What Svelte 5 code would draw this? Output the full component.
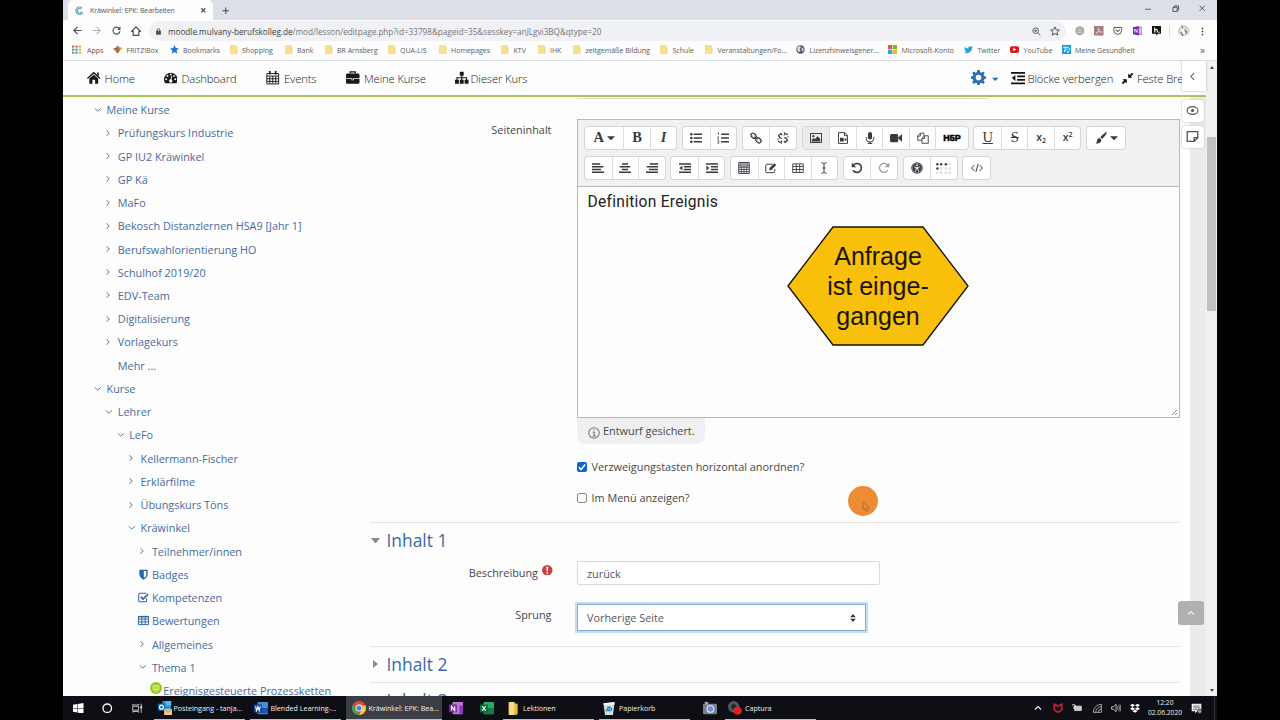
<script lang="ts">
	type Bookmark = { icon: string; label: string; width: number }
	type TreeItem = { label: string; level: number; icon: string }
	type Tool = { icon: string; width?: number; state?: string }

	const icons: Record<string, string> = {
		// browser
		site: '<g fill="none" stroke-width="2"><path d="M13 4A6.500 6.500 0 1 0 14 11" stroke="#7b9ab0"/><path d="M11 5.500A4 4 0 1 0 12 10" stroke="#5aa9bd"/></g>',
		close: '<path d="M3 3l10 10M13 3L3 13" stroke="currentColor" stroke-width="2.600"/>',
		plus: '<path d="M8 1v14M1 8h14" stroke="currentColor" stroke-width="2"/>',
		minimize: '<path d="M2 8.500h12" stroke="currentColor" stroke-width="1.500"/>',
		restore: '<path d="M2 5h9v9H2zM5 5V2h9v9h-3" fill="none" stroke="currentColor" stroke-width="1.800"/>',
		closeWindow: '<path d="M1.500 1.500l13 13M14.500 1.500l-13 13" stroke="currentColor" stroke-width="2"/>',
		back: '<path d="M15 8H2M8 1.500L1.500 8 8 14.500" fill="none" stroke="currentColor" stroke-width="2"/>',
		forward: '<path d="M1 8h13M8 1.500L14.500 8 8 14.500" fill="none" stroke="currentColor" stroke-width="2"/>',
		reload: '<path d="M13 4.500A6.200 6.200 0 1 0 14.200 9" fill="none" stroke="currentColor" stroke-width="2"/><path d="M15 1v6H9z" fill="currentColor"/>',
		house: '<path d="M1 8.500L8 1.500l7 7h-2.500V15h-9V8.500z" fill="none" stroke="currentColor" stroke-width="1.900"/>',
		lock: '<rect x="2.500" y="6.500" width="11" height="9" rx="1" fill="currentColor"/><path d="M5 7V4.500a3 3 0 0 1 6 0V7" fill="none" stroke="currentColor" stroke-width="1.800"/>',
		magnifier: '<circle cx="6.500" cy="6.500" r="5" fill="none" stroke="currentColor" stroke-width="1.600"/><path d="M10 10l5 5M4 6.500h5M6.500 4v5" stroke="currentColor" stroke-width="1.500"/>',
		star: '<path d="M8 1.500l2 4.600 5 .4-3.800 3.300 1.200 4.900L8 12.100l-4.400 2.600 1.200-4.900L1 6.500l5-.4z" fill="none" stroke="currentColor" stroke-width="1.500"/>',
		extGrey: '<circle cx="8" cy="8" r="7.500" fill="#aaa"/><path d="M4.500 10.500h7M5.500 8l2.500-3 2.500 3" stroke="#ddd" stroke-width="1.500" fill="none"/>',
		pdf: '<path d="M0 0h16v16H0z" fill="#a67c7c"/><path d="M3 13c4-3 5-6 4.500-9.500C9 8 10 10 13.500 10.500 9 9 6 10 3 13z" fill="none" stroke="#e9dcdc" stroke-width="1.300"/>',
		pocket: '<path d="M1.500 2.500h13v5a6.500 6.500 0 0 1-13 0z" fill="none" stroke="#555" stroke-width="1.600"/><path d="M4.500 6L8 9.500 11.500 6" fill="none" stroke="#555" stroke-width="1.700"/>',
		onenoteExt: '<path d="M0 2l10-2v16L0 14z" fill="#7a28a8"/><path d="M10 2h5.500v12H10" fill="#d9b8ea" stroke="#7a28a8"/><path d="M3 11V5l4 6V5" fill="none" stroke="#fff" stroke-width="1.400"/>',
		hypothesis: '<path d="M0 0h16v13h-6l-2 3-2-3H0z" fill="#151515"/><path d="M4.500 2.500V11M4.500 7.500c3-3 4.500-1.500 4.500 1V11" fill="none" stroke="#fff" stroke-width="1.900"/><circle cx="12" cy="10.500" r="1.100" fill="#fff"/>',
		avatar: '<circle cx="8" cy="8" r="8" fill="#d7d3d3"/><path d="M4 2c3-1 5 1 4.500 4L13 13l-3 2-5-5z" fill="#faf7f6"/><path d="M5 1l2 4M4 10l3 5M9 7l3 3-2 3" stroke="#665558" stroke-width="1.400" fill="none"/>',
		dots: '<g fill="currentColor"><circle cx="8" cy="2.500" r="1.600"/><circle cx="8" cy="8" r="1.600"/><circle cx="8" cy="13.500" r="1.600"/></g>',
		apps: '<path d="M0 1h4v3.500H0z" fill="#d9534a"/><path d="M6 1h4v3.500H6z" fill="#dc6258"/><path d="M12 1h4v3.500h-4z" fill="#e0a03e"/><path d="M0 6.500h4V10H0z" fill="#51a068"/><path d="M6 6.500h4V10H6z" fill="#4b86d8"/><path d="M12 6.500h4V10h-4z" fill="#dfae45"/><path d="M0 12h4v3.500H0z" fill="#56a26a"/><path d="M6 12h4v3.500H6z" fill="#5b9a68"/><path d="M12 12h4v3.500h-4z" fill="#d8b64a"/>',
		fritz: '<path d="M8 1l3 3 5 1.500L13 9l-5 6-4-5-4-3 5-2z" fill="#d63b2a"/><path d="M0 6c5-2 11-2 16 1-4 4-12 4-16-1z" fill="#e8bb2e"/><path d="M3 6.500l9 1" stroke="#38497c" stroke-width="2"/>',
		bluestar: '<path d="M8 0l2.300 5.500 5.700.5-4.300 3.800L13 15.500 8 12.500l-5 3 1.300-5.700L0 6l5.700-.5z" fill="#2475d3"/>',
		folder: '<path d="M2 0h11v2.500L15 4v12H2z" fill="#f1d77a"/><path d="M2 0h11v12.500l2 3.500H2z" fill="#f8e08e"/>',
		globe: '<circle cx="8" cy="8" r="7.500" fill="#555b60"/><path d="M3 3l4-1 2 3-3 2 2 3-3 3-3-5zM11 4l3 4-2 4-2-4z" fill="#dfe2e4"/>',
		microsoft: '<path d="M0 0h7.500v7.500H0z" fill="#e8573a"/><path d="M8.500 0H16v7.500H8.500z" fill="#83b82e"/><path d="M0 8.500h7.500V16H0z" fill="#33a1de"/><path d="M8.500 8.500H16V16H8.500z" fill="#f0b52a"/>',
		twitter: '<path d="M0 2.500c2 2.300 4.500 3.300 7.500 3.400C7.300 2.500 10.800.8 13.300 3L16 2.200 14.500 5C14.500 12 7 17 0 13.200c2 0 3.300-.4 4.600-1.400-1.700-.2-2.600-1-3-2.300h1.300C1.200 8.600.6 7.500.6 6l1.300.4C.6 5.300 0 4 .1 2.500z" fill="#2aa3df"/>',
		youtube: '<rect y="2" width="16" height="12" rx="3" fill="#e0191b"/><path d="M6 5v6l5-3z" fill="#fff"/>',
		tk: '<path d="M0 0h16v16H0z" fill="#1c9ad6"/><path d="M2 4h8c5 0 5 8-1 8l3 2M6 4L4 13M10 6l-5 5" stroke="#fff" stroke-width="1.600" fill="none"/>',
		// course navigation
		home: '<path d="M8 1l8 7.200-1 1.200L8 3.200 1 9.400 0 8.200zM12 1.800h2V6l-2-1.800zM2.800 9L8 4.400 13.200 9v6H9.600v-4.500H6.400V15H2.800z" fill="currentColor"/>',
		gauge: '<path d="M0 10a8 8 0 0 1 16 0c0 1.800-.5 3.300-1.300 4.500H1.300A8 8 0 0 1 0 10z" fill="currentColor"/><g fill="#fff"><circle cx="2.600" cy="9.800" r="1.100"/><circle cx="4.200" cy="5.900" r="1.100"/><circle cx="8" cy="4.200" r="1.100"/><circle cx="11.800" cy="5.900" r="1.100"/><circle cx="13.400" cy="9.800" r="1.100"/><path d="M8.700 5.800l1 .2-.8 4a2 2 0 1 1-1.100-.2z"/></g>',
		calendar: '<path d="M1 3h14v12.300H1zM1 6h14M1 9.200h14M1 12.300h14M4.500 6v9M8 6v9M11.500 6v9" stroke="currentColor" stroke-width="1.100" fill="none"/><path d="M4.500 0v4M11.500 0v4" stroke="currentColor" stroke-width="2"/>',
		briefcase: '<path d="M5 3V1h6v2" fill="none" stroke="currentColor" stroke-width="1.500"/><path d="M1 3h14l1 1v4.500H0V4zM0 9.500h6.500V11h3V9.500H16V14l-1 1H1l-1-1zM7.200 9h1.600v1.200H7.200z" fill="currentColor"/>',
		sitemap: '<path d="M5.700 1h4.600v4.500H5.700zM0 10.500h4.600V15H0zM5.700 10.500h4.600V15H5.700zM11.400 10.500H16V15h-4.600z" fill="currentColor"/><path d="M8 5v6M2.300 11V8h11.400v3" stroke="currentColor" stroke-width="1.300" fill="none"/>',
		gear: '<path d="M6.700 0h2.600l.4 2.200 1.300.6 1.900-1.300 1.800 1.800-1.300 1.900.6 1.300 2 .4v2.500l-2 .4-.6 1.300 1.300 1.900-1.800 1.800-1.900-1.300-1.300.6-.4 2H6.700l-.4-2-1.300-.6-1.900 1.300L1.300 13l1.300-1.900L2 9.800l-2-.4V6.900l2-.4.600-1.300-1.300-1.900 1.800-1.800L5 2.800l1.300-.6zM8 5a3 3 0 1 0 0 6 3 3 0 0 0 0-6z" fill="currentColor" fill-rule="evenodd"/>',
		caret: '<path d="M0 4.500h16L8 12.500z" fill="currentColor"/>',
		blocks: '<path d="M0 1h16v2H0zM7 5h9v2H7zM7 9h9v2H7zM0 13h16v2H0zM5 4.500v7L1 8z" fill="currentColor"/>',
		compress: '<path d="M9 .800V7h6.200zM7 15.200V9H.800z" fill="currentColor"/><path d="M15.500.5l-5 5M.5 15.500l5-5" stroke="currentColor" stroke-width="2.600"/>',
		left: '<path d="M11 2L5 8l6 6" fill="none" stroke="currentColor" stroke-width="1.800"/>',
		right: '<path d="M5 2.500L10.500 8 5 13.500" fill="none" stroke="currentColor" stroke-width="2"/>',
		down: '<path d="M1.500 5L8 11l6.500-6" fill="none" stroke="currentColor" stroke-width="2"/>',
		up: '<path d="M2 11l6-6 6 6" fill="none" stroke="currentColor" stroke-width="2.200"/>',
		eye: '<ellipse cx="8" cy="8" rx="6.700" ry="4.800" fill="none" stroke="currentColor" stroke-width="1.400"/><circle cx="8" cy="8" r="1.900" fill="currentColor"/>',
		note: '<path d="M1.500 2h13v7.500L10 14H1.500zM14.500 9.500H10V14" fill="none" stroke="currentColor" stroke-width="1.600"/>',
		shield: '<path d="M2 1h12v6.500c0 4-3 6-6 8-3-2-6-4-6-8z" fill="currentColor"/><path d="M8.500 3H12v4.500c0 2.500-1.500 4-3.500 5.300z" fill="#fff"/>',
		checked: '<path d="M12.500 9v3.500a1.500 1.500 0 0 1-1.500 1.800H2.800A1.800 1.800 0 0 1 1 12.500V3.500a1.800 1.800 0 0 1 1.800-1.800H12" fill="none" stroke="currentColor" stroke-width="1.500"/><path d="M4 7l3.300 3.300L14.800 3" fill="none" stroke="currentColor" stroke-width="2.600"/>',
		table: '<path d="M.7 2h14.600v12H.7zM.7 6h14.600M.7 10h14.600M5.500 2v12M10.500 2v12" fill="none" stroke="currentColor" stroke-width="1.400"/><path d="M.7 1.500h14.600v2H.7z" fill="currentColor"/>',
		lesson: '<circle cx="8" cy="8" r="8" fill="#99c816"/><rect x="4" y="4.500" width="8" height="6" rx="1" fill="#b9dc55" stroke="#e5f4bd"/><path d="M5.500 12.300h5" stroke="#e5f4bd"/>',
		// editor toolbar
		ul: '<path d="M5 2h11v2H5zM5 7h11v2H5zM5 12h11v2H5z" fill="currentColor"/><g fill="currentColor"><circle cx="1.800" cy="3" r="1.700"/><circle cx="1.800" cy="8" r="1.700"/><circle cx="1.800" cy="13" r="1.700"/></g>',
		ol: '<path d="M5.500 2H16v2H5.500zM5.500 7H16v2H5.500zM5.500 12H16v2H5.500z" fill="currentColor"/><path d="M1 1l1-.5V4M.5 6.500h2L.7 9.500h2M.6 11.500h2L1.500 13h1v2H.5" fill="none" stroke="currentColor" stroke-width=".9"/>',
		link: '<g fill="none" stroke="currentColor" stroke-width="1.700"><rect x="1" y="2.200" width="7.500" height="5.400" rx="2.500" transform="rotate(45 4.700 4.900)"/><rect x="7.500" y="8.400" width="7.500" height="5.400" rx="2.500" transform="rotate(45 11.300 11.100)"/><path d="M6 6.200l4 3.600"/></g>',
		unlink: '<g fill="none" stroke="currentColor" stroke-width="1.700"><path d="M6.800 4.200L5.200 2.200 2 4.800l2.300 3.400 2 .3M9.200 11.800l1.600 2L14 11.200l-2.300-3.400-2-.3"/><path d="M9 4.500L12 1.800 14.500 4M7 11.500L4 14.200 1.500 12" stroke-width="1.400"/></g><path d="M0 9.500h2.500M6 13v3M10 0v2.500M13.500 6.500H16" stroke="currentColor"/>',
		image: '<rect x=".7" y="2" width="14.600" height="12" fill="none" stroke="currentColor" stroke-width="1.300"/><circle cx="4.500" cy="5.500" r="1.500" fill="currentColor"/><path d="M2.500 12.500V10L5 8l1.500 1.500L10 5.500l3.500 3.500v3.500z" fill="currentColor"/>',
		media: '<path d="M2 .8h8.500L14 4.500v10.700H2zM10 1v4h4" fill="none" stroke="currentColor" stroke-width="1.300"/><path d="M4 7.500h5v5H4zM9.500 10L12.500 7.500v5z" fill="currentColor"/>',
		mic: '<rect x="5.300" width="5.400" height="10" rx="2.700" fill="currentColor"/><path d="M3 6.500v2a5 5 0 0 0 10 0v-2M8 13v2.500M5 15.300h6" fill="none" stroke="currentColor" stroke-width="1.300"/>',
		video: '<rect y="2.500" width="11" height="11" rx="2" fill="currentColor"/><path d="M10.500 8L16 2.700v10.600z" fill="currentColor"/>',
		files: '<path d="M6.500 11H1V5l3.500-3.500H9V5M4.500 2v3.500H1M10 5h5v10H6.500V8.500zM10 5v3.500H6.500" fill="none" stroke="currentColor" stroke-width="1.200"/>',
		brush: '<path d="M15.500.3c1 1-2.500 6-6 9L7 7C9.800 3.500 14.500-.6 15.500.3zM6 8l2.500 2.300c0 4-4 6-8 4.700 2-.5 2-2 2.300-4C3.300 9.300 4.500 8 6 8z" fill="currentColor"/>',
		alignLeft: '<path d="M0 1.500h11v2H0zM0 5.200h15v2H0zM0 8.900h12v2H0zM0 12.600h16v2H0z" fill="currentColor"/>',
		alignCenter: '<path d="M4 1.500h8v2H4zM1 5.200h14v2H1zM4 8.900h8v2H4zM0 12.600h16v2H0z" fill="currentColor"/>',
		alignRight: '<path d="M5 1.500h11v2H5zM1 5.200h15v2H1zM4 8.900h12v2H4zM0 12.600h16v2H0z" fill="currentColor"/>',
		outdent: '<path d="M0 1.500h16v2H0zM6.500 5.200H16v2H6.500zM6.500 8.900H16v2H6.500zM0 12.600h16v2H0zM4.500 4.700v6.600L.5 8z" fill="currentColor"/>',
		indent: '<path d="M0 1.500h16v2H0zM6.500 5.200H16v2H6.500zM6.500 8.900H16v2H6.500zM0 12.600h16v2H0zM.5 4.700v6.600l4-3.300z" fill="currentColor"/>',
		calculator: '<path d="M1 .7h14v14.600H1z" fill="none" stroke="currentColor" stroke-width="1.300"/><path d="M2.500 2.500h11v3h-11zM1 7.500h14M1 10h14M1 12.700h14M4.500 6v9M8 6v9M11.500 6v9" fill="#bbb" stroke="currentColor" stroke-width="1"/>',
		edit: '<path d="M13 9.500v3a1.600 1.600 0 0 1-1.600 1.700H2.600A1.600 1.600 0 0 1 1 12.500v-8A1.600 1.600 0 0 1 2.600 3H10" fill="none" stroke="currentColor" stroke-width="1.300"/><path d="M5.500 11l.6-3L12.500 1.500 15 4 8.500 10.500z" fill="currentColor"/>',
		grid: '<path d="M1 2.500h14v11.500H1zM1 6h14M1 10h14M5.700 2.500V14M10.300 2.500V14" fill="none" stroke="currentColor" stroke-width="1.200"/>',
		cursor: '<path d="M4.500 1C6.500 1 8 1.500 8 3c0-1.500 1.500-2 3.500-2M8 3v10M4.500 15C6.500 15 8 14.500 8 13c0 1.500 1.500 2 3.500 2M6 8h4" fill="none" stroke="currentColor" stroke-width="1.300"/>',
		undo: '<path d="M3 4.500a6 6 0 1 1-.2 6.500" fill="none" stroke="currentColor" stroke-width="2.100"/><path d="M1 1v6h6z" fill="currentColor"/>',
		redo: '<path d="M13 4.500a6 6 0 1 0 .2 6.500" fill="none" stroke="currentColor" stroke-width="1.700"/><path d="M15 1v6H9z" fill="currentColor"/>',
		access: '<circle cx="8" cy="8" r="7.700" fill="currentColor"/><circle cx="8" cy="8" r="6.400" fill="none" stroke="#fff" stroke-width=".5"/><circle cx="8" cy="4.200" r="1.200" fill="#fff"/><path d="M4 6.500l3 .7v2L5.700 13M12 6.500l-3 .7v2l1.300 3.800M7 7.300h2v2H7z" fill="none" stroke="#fff"/>',
		braille: '<g fill="currentColor"><circle cx="1.500" cy="3.500" r="1.300"/><circle cx="5.500" cy="3.500" r="1.300"/><circle cx="1.500" cy="8" r="1.300"/><circle cx="10.500" cy="3.500" r="1.300"/></g><g fill="none" stroke="#bbb" stroke-width=".6"><circle cx="14.500" cy="3.500" r="1"/><circle cx="5.500" cy="8" r="1"/><circle cx="10.500" cy="8" r="1"/><circle cx="14.500" cy="8" r="1"/><circle cx="1.500" cy="12.500" r="1"/><circle cx="5.500" cy="12.500" r="1"/><circle cx="10.500" cy="12.500" r="1"/><circle cx="14.500" cy="12.500" r="1"/></g>',
		code: '<path d="M4.500 4L.8 8l3.700 4M11.500 4l3.700 4-3.700 4M9.500 2.500l-3 11" fill="none" stroke="currentColor" stroke-width="1.300"/>',
		info: '<circle cx="8" cy="8" r="7" fill="none" stroke="currentColor" stroke-width="1.400"/><path d="M7 4h2M6.300 7H8.300v5M6 12h4.500" fill="none" stroke="currentColor" stroke-width="1.500"/>',
		required: '<circle cx="8" cy="8" r="8" fill="#c9403e"/><path d="M6.600 2.500h2.800L9 9.500H7zM6.800 11h2.400v2.400H6.800z" fill="#fff"/>',
		updown: '<path d="M8 0l5.500 6.500h-11zM8 16l5.500-6.500h-11z" fill="currentColor"/>',
		check: '<path d="M3 8.500l3.500 3.500L13 4" fill="none" stroke="#fff" stroke-width="2.500"/>',
		pointer: '<path d="M3 1v12l3-2.500 2 4.500 2.200-1-2-4.300H12z" fill="#ec8c35" stroke="#a96430" stroke-width="1.100"/>',
		// taskbar
		windows: '<path d="M0 2.500l6.500-1v6H0zM7.300 1.400L16 0v7.500H7.300zM0 8.500h6.500v6L0 13.500zM7.300 8.500H16V16l-8.700-1.300z" fill="#fff"/>',
		cortana: '<circle cx="8" cy="8" r="6.500" fill="none" stroke="#fff" stroke-width="2"/>',
		taskview: '<path d="M1 5h9v6H1zM1 1.500v1.500h9V1.500M1 14.500V13h9v1.500M14 1v14" fill="none" stroke="#ddd" stroke-width="1.300"/><path d="M12.500 5h3v3h-3z" fill="#ddd"/>',
		outlook: '<path d="M5 0h10v11H5z" fill="#2a8fd8"/><path d="M9 0h6v5H9z" fill="#51c1f0"/><path d="M0 3h8v8H0z" fill="#0f65b5"/><circle cx="4" cy="7" r="2.200" fill="none" stroke="#fff" stroke-width="1.400"/><path d="M7 9h9v7H7z" fill="#f3c980"/><path d="M7 9l4.500 4L16 9" fill="none" stroke="#b98138"/>',
		word: '<rect x="4" y="1" width="12" height="14" rx="1" fill="#3f8fe0"/><path d="M4 8h12v6H4z" fill="#1d55ae"/><path d="M0 4h9v9H0z" fill="#174a9d"/><path d="M1.800 6l1.200 5 1.500-4.500L6 11l1.200-5" fill="none" stroke="#fff" stroke-width="1.200"/>',
		chrome: '<circle cx="8" cy="8" r="8" fill="#e2483a"/><path d="M1 4L8 16A8 8 0 0 1 1 4z" fill="#35a456"/><path d="M16 8a8 8 0 0 1-8 8l4-7V5h3.500z" fill="#f8ce3b"/><circle cx="8" cy="8" r="4" fill="#fff"/><circle cx="8" cy="8" r="3" fill="#4a86df"/>',
		onenote: '<rect x="4" y="1" width="12" height="14" rx="1" fill="#c173df"/><path d="M12 5h4v10h-4z" fill="#8b39b4"/><path d="M0 4h9v9H0z" fill="#7425a0"/><path d="M3 11V6l3.500 5V6" fill="none" stroke="#fff" stroke-width="1.300"/>',
		excel: '<rect x="4" y="1" width="12" height="14" rx="1" fill="#2caa67"/><path d="M4 8h12v7H4z" fill="#177943"/><path d="M0 4h9v9H0z" fill="#126b3b"/><path d="M2.500 6l4 5M6.500 6l-4 5" stroke="#fff" stroke-width="1.300"/>',
		explorer: '<path d="M3 1h7v2h3v12l-4 1H3z" fill="#f5db79"/><path d="M10 3h3v12l-4 1z" fill="#e3b84b"/>',
		bin: '<path d="M1.500 2.500L14.500 1l-2 15h-9z" fill="#d5dde1"/><path d="M2 2.500l12-1 .2 2.500-12 .5z" fill="#f2f5f5"/><path d="M5 11l2-4 2 4zM8 6.500l3 2-1 3" fill="none" stroke="#308ac4" stroke-width="1.500"/>',
		camera: '<rect y="3" width="16" height="12" rx="1" fill="#77808a"/><path d="M2 1h4v3H2z" fill="#9da5ab"/><circle cx="8.500" cy="9" r="4.500" fill="#dce8f5"/><circle cx="8.500" cy="9" r="3.200" fill="#7289dc"/>',
		captura: '<circle cx="6.500" cy="6.500" r="6.500" fill="#52575a"/><circle cx="6.500" cy="6.500" r="3" fill="#25282a"/><circle cx="11" cy="11" r="4.800" fill="#e02126"/>',
		mcafee: '<path d="M2 2l6 3 6-3v9l-6 4-6-4z" fill="none" stroke="#c61f39" stroke-width="2.700"/>',
		battery: '<path d="M4 5h11v7H4z" fill="#ccc" stroke="#eee"/><path d="M0 3h5v3H3v3" fill="none" stroke="#eee" stroke-width="1.500"/>',
		wifi: '<path d="M2 15A13 13 0 0 1 15 2M6 15a9 9 0 0 1 9-9M10 15a5 5 0 0 1 5-5M15 2v13H2" fill="none" stroke="#bbb" stroke-width="1.300"/>',
		sound: '<path d="M1 6h3l4-4v12l-4-4H1z" fill="none" stroke="#ddd" stroke-width="1.300"/><path d="M10 5.500q2 2.500 0 5M12 3.500q3.500 4.500 0 9M14 2q4 6 0 12" fill="none" stroke="#ccc" stroke-width="1.100"/>',
		dropbox: '<path d="M4 1l4 2.700-4 2.700L0 3.700zM12 1l4 2.700-4 2.700-4-2.700zM4 6.400l4 2.700-4 2.700L0 9.100zM12 6.400l4 2.700-4 2.700-4-2.700zM8 10.500l4 2.500-4 2.500L4 13z" fill="#fff"/>',
		notification: '<path d="M1 1h14v11H9l-3 3v-3H1z" fill="#eee"/><path d="M3.500 4.500h9M3.500 7h9M3.500 9.500h5" stroke="#444"/><circle cx="12.500" cy="12" r="3.200" fill="#999" stroke="#222"/>',
	}

	const bookmarks: Bookmark[] = [
		{ icon: 'apps', label: 'Apps', width: 41 },
		{ icon: 'fritz', label: 'FRITZ!Box', width: 56.5 },
		{ icon: 'bluestar', label: 'Bookmarks', width: 59 },
		{ icon: 'folder', label: 'Shopping', width: 55 },
		{ icon: 'folder', label: 'Bank', width: 40 },
		{ icon: 'folder', label: 'BR Arnsberg', width: 63 },
		{ icon: 'folder', label: 'QUA-LiS', width: 51 },
		{ icon: 'folder', label: 'Homepages', width: 62.5 },
		{ icon: 'folder', label: 'KTV', width: 36.5 },
		{ icon: 'folder', label: 'IHK', width: 35.5 },
		{ icon: 'folder', label: 'zeitgemäße Bildung', width: 87 },
		{ icon: 'folder', label: 'Schule', width: 45 },
		{ icon: 'folder', label: 'Veranstaltungen/Fo...', width: 92 },
		{ icon: 'globe', label: 'Lizenzhinweisgener...', width: 92 },
		{ icon: 'microsoft', label: 'Microsoft-Konto', width: 76 },
		{ icon: 'twitter', label: 'Twitter', width: 46 },
		{ icon: 'youtube', label: 'YouTube', width: 51.5 },
		{ icon: 'tk', label: 'Meine Gesundheit', width: 80 },
	]

	const navItems = [
		{ icon: 'home', label: 'Home', width: 77 },
		{ icon: 'gauge', label: 'Dashboard', width: 102.5 },
		{ icon: 'calendar', label: 'Events', width: 80 },
		{ icon: 'briefcase', label: 'Meine Kurse', width: 109 },
		{ icon: 'sitemap', label: 'Dieser Kurs', width: 90 },
	]

	const tree: TreeItem[] = [
		{ label: 'Meine Kurse', level: 0, icon: 'down' },
		{ label: 'Prüfungskurs Industrie', level: 1, icon: 'right' },
		{ label: 'GP IU2 Kräwinkel', level: 1, icon: 'right' },
		{ label: 'GP Kä', level: 1, icon: 'right' },
		{ label: 'MaFo', level: 1, icon: 'right' },
		{ label: 'Bekosch Distanzlernen HSA9 [Jahr 1]', level: 1, icon: 'right' },
		{ label: 'Berufswahlorientierung HO', level: 1, icon: 'right' },
		{ label: 'Schulhof 2019/20', level: 1, icon: 'right' },
		{ label: 'EDV-Team', level: 1, icon: 'right' },
		{ label: 'Digitalisierung', level: 1, icon: 'right' },
		{ label: 'Vorlagekurs', level: 1, icon: 'right' },
		{ label: 'Mehr ...', level: 1, icon: '' },
		{ label: 'Kurse', level: 0, icon: 'down' },
		{ label: 'Lehrer', level: 1, icon: 'down' },
		{ label: 'LeFo', level: 2, icon: 'down' },
		{ label: 'Kellermann-Fischer', level: 3, icon: 'right' },
		{ label: 'Erklärfilme', level: 3, icon: 'right' },
		{ label: 'Übungskurs Töns', level: 3, icon: 'right' },
		{ label: 'Kräwinkel', level: 3, icon: 'down' },
		{ label: 'Teilnehmer/innen', level: 4, icon: 'right' },
		{ label: 'Badges', level: 4, icon: 'shield' },
		{ label: 'Kompetenzen', level: 4, icon: 'checked' },
		{ label: 'Bewertungen', level: 4, icon: 'table' },
		{ label: 'Allgemeines', level: 4, icon: 'right' },
		{ label: 'Thema 1', level: 4, icon: 'down' },
		{ label: 'Ereignisgesteuerte Prozessketten', level: 5, icon: 'lesson' },
	]

	const treeIconSizes: Record<string, number> = { lesson: 12, down: 7.5, right: 8 }

	const toolRows: Tool[][][] = [
		[
			[{ icon: 'A', width: 38.4 }, { icon: 'B' }, { icon: 'I' }],
			[{ icon: 'ul' }, { icon: 'ol' }],
			[{ icon: 'link' }, { icon: 'unlink' }],
			[{ icon: 'image', state: 'active' }, { icon: 'media' }, { icon: 'mic' }, { icon: 'video' }, { icon: 'files' }, { icon: 'H5P', width: 32.4 }],
			[{ icon: 'U' }, { icon: 'S' }, { icon: 'sub' }, { icon: 'sup' }],
			[{ icon: 'brush', width: 38 }],
		],
		[
			[{ icon: 'alignLeft' }, { icon: 'alignCenter' }, { icon: 'alignRight' }],
			[{ icon: 'outdent' }, { icon: 'indent' }],
			[{ icon: 'calculator' }, { icon: 'edit' }, { icon: 'grid' }, { icon: 'cursor' }],
			[{ icon: 'undo' }, { icon: 'redo', state: 'disabled' }],
			[{ icon: 'access' }, { icon: 'braille' }],
			[{ icon: 'code' }],
		],
	]

	const tasks = [
		{ icon: 'windows', label: '', width: 30.5, size: 10.5 },
		{ icon: 'cortana', label: '', width: 27.5, size: 10.5 },
		{ icon: 'taskview', label: '', width: 33, size: 10.5 },
		{ icon: 'outlook', label: 'Posteingang - tanja...', width: 91, open: true },
		{ icon: 'word', label: 'Blended Learning-...', width: 91, open: true },
		{ icon: 'chrome', label: 'Kräwinkel: EPK: Bea...', width: 95.5, open: true, active: true },
		{ icon: 'onenote', label: '', width: 29 },
		{ icon: 'excel', label: '', width: 32 },
		{ icon: 'explorer', label: 'Lektionen', width: 91, open: true },
		{ icon: 'bin', label: 'Papierkorb', width: 91, open: true },
		{ icon: 'camera', label: '', width: 30 },
		{ icon: 'captura', label: 'Captura', width: 91, open: true },
	]

	const extensions = ['extGrey', 'pdf', 'pocket', 'onenoteExt', 'hypothesis']
	const tray = ['up', 'mcafee', 'battery', 'wifi', 'sound', 'dropbox']

	let horizontal = $state(true)
	let inMenu = $state(false)
	let description = $state('zurück')
</script>

{#snippet icon(name: string, size: number)}
	<svg class="icon" viewBox="0 0 16 16" width={size} height={size} aria-hidden="true">{@html icons[name]}</svg>
{/snippet}

<div class="screen">
	<div class="window">
		<header class="tabstrip">
			<div class="tab">
				{@render icon('site', 9)}
				<span class="tab-title">Kräwinkel: EPK: Bearbeiten</span>
				{@render icon('close', 6.5)}
			</div>
			<span class="new-tab">{@render icon('plus', 7.5)}</span>
			<div class="window-controls">
				{@render icon('minimize', 8)}
				{@render icon('restore', 7.5)}
				{@render icon('closeWindow', 6.5)}
			</div>
		</header>

		<div class="address-row">
			<div class="history">
				<span>{@render icon('back', 9)}</span>
				<span class="dim">{@render icon('forward', 9)}</span>
				<span>{@render icon('reload', 9)}</span>
				<span>{@render icon('house', 10)}</span>
			</div>
			<div class="url">
				{@render icon('lock', 7)}
				<span class="url-text"><b>moodle.mulvany-berufskolleg.de</b>/mod/lesson/editpage.php?id=33798&amp;pageid=35&amp;sesskey=anJLgvi3BQ&amp;qtype=20</span>
				{@render icon('magnifier', 9)}
				{@render icon('star', 10)}
			</div>
			<div class="extensions">
				{#each extensions as name}
					<span>{@render icon(name, 9.5)}</span>
				{/each}
			</div>
			<div class="profile">
				{@render icon('avatar', 11.5)}
				{@render icon('dots', 9)}
			</div>
		</div>

		<div class="bookmarks">
			{#each bookmarks as mark}
				<div class="bookmark {mark.icon}" style="width: {mark.width}px">
					{@render icon(mark.icon, 9)}
					<span>{mark.label}</span>
				</div>
			{/each}
			<span class="more">»</span>
		</div>

		<div class="viewport">
			<nav class="navbar">
				{#each navItems as item}
					<div class="nav-item {item.icon}" style="width: {item.width}px">
						{@render icon(item.icon, 13.5)}
						<span>{item.label}</span>
					</div>
				{/each}
				<div class="nav-right">
					<span class="settings">{@render icon('gear', 15)}{@render icon('caret', 6.5)}</span>
					<span class="nav-blocks">{@render icon('blocks', 14)}Blöcke verbergen</span>
					<span class="nav-width">{@render icon('compress', 11)}Feste Bre</span>
				</div>
			</nav>

			<div class="page">
				<aside class="tree">
					{#each tree as item}
						<div class="tree-row" style="padding-left: {item.level * 11.35}px">
							<span class="tree-icon {item.icon}">
								{#if item.icon}
									{@render icon(item.icon, treeIconSizes[item.icon] ?? 11)}
								{/if}
							</span>
							<span class="tree-label">{item.label}</span>
						</div>
					{/each}
				</aside>

				<main class="form">
					<div class="field-end"></div>
					<div class="row">
						<span class="label content-label">Seiteninhalt</span>
						<div>
							<div class="editor">
								<div class="toolbar">
									{#each toolRows as groups}
										<div class="tool-row">
											{#each groups as group}
												<div class="tool-group">
													{#each group as tool}
														<span class="tool {tool.state ?? ''}" style="width: {tool.width ?? 26.5}px">
															{#if tool.icon === 'A'}
																<b class="serif">A</b>{@render icon('caret', 8)}
															{:else if tool.icon === 'B'}
																<b class="serif">B</b>
															{:else if tool.icon === 'I'}
																<b class="serif"><i>I</i></b>
															{:else if tool.icon === 'U'}
																<span class="serif underline">U</span>
															{:else if tool.icon === 'S'}
																<span class="serif strike">S</span>
															{:else if tool.icon === 'H5P'}
																<b class="h5p">H5P</b>
															{:else if tool.icon === 'sub'}
																<b class="script">x<sub>2</sub></b>
															{:else if tool.icon === 'sup'}
																<b class="script">x<sup>2</sup></b>
															{:else if tool.icon === 'brush'}
																{@render icon('brush', 12)}{@render icon('caret', 8)}
															{:else}
																{@render icon(tool.icon, tool.icon === 'braille' ? 15 : 12)}
															{/if}
														</span>
													{/each}
												</div>
											{/each}
										</div>
									{/each}
								</div>
								<div class="content">
									<p>Definition Ereignis</p>
									<svg class="event" width="182" height="120" viewBox="0 0 182 120">
										<path d="M1 60L46 1h90l45 59-45 59H46z" fill="#f8bf0b" stroke="#151005" stroke-width="1.300" />
										<text x="91" y="38.500">Anfrage</text>
										<text x="91" y="68.500">ist einge-</text>
										<text x="91" y="98.500">gangen</text>
									</svg>
									<svg class="grip" width="7" height="7" viewBox="0 0 7 7"><path d="M1 6l5-5M4 6l2-2" stroke="#777" stroke-width=".8" /></svg>
								</div>
							</div>
							<div class="saved">{@render icon('info', 12)}<span>Entwurf gesichert.</span></div>
						</div>
					</div>
					<label class="check-row">
						<input type="checkbox" bind:checked={horizontal} />
						<span class="box" class:on={horizontal}>{#if horizontal}{@render icon('check', 10)}{/if}</span>
						Verzweigungstasten horizontal anordnen?
					</label>
					<label class="check-row">
						<input type="checkbox" bind:checked={inMenu} />
						<span class="box" class:on={inMenu}>{#if inMenu}{@render icon('check', 10)}{/if}</span>
						Im Menü anzeigen?
					</label>

					<section class="open">
						<h3><span class="fold"></span>Inhalt 1</h3>
						<div class="row">
							<span class="label required">Beschreibung {@render icon('required', 10.5)}</span>
							<input class="text-input" type="text" bind:value={description} />
						</div>
						<div class="row jump">
							<span class="label">Sprung</span>
							<div class="select"><span>Vorherige Seite</span>{@render icon('updown', 8)}</div>
						</div>
					</section>
					<section>
						<h3><span class="fold closed"></span>Inhalt 2</h3>
					</section>
					<section>
						<h3><span class="fold closed"></span>Inhalt 3</h3>
					</section>
				</main>
				<div class="gutter"></div>
			</div>

			<div class="scrollbar">
				<span class="arrow up"></span>
				<span class="thumb"></span>
				<span class="arrow down"></span>
			</div>

			<div class="side-tools">
				<span class="side-toggle">{@render icon('left', 9)}</span>
				<span class="side-button">{@render icon('eye', 13)}</span>
				<span class="side-button">{@render icon('note', 13)}</span>
			</div>
			<span class="to-top">{@render icon('up', 8)}</span>
			<span class="click">{@render icon('pointer', 11)}</span>
		</div>

		<footer class="taskbar">
			{#each tasks as task}
				<div class="task {task.icon}" class:open={task.open} class:active={task.active} style="width: {task.width}px">
					{@render icon(task.icon, task.size ?? 14)}
					{#if task.label}<span>{task.label}</span>{/if}
				</div>
			{/each}
			<div class="tray">
				{#each tray as name}
					<span class="tray-icon">{@render icon(name, name === 'up' ? 8 : 10)}</span>
				{/each}
				<div class="clock"><span>12:20</span><span>02.06.2020</span></div>
				<span class="notify">{@render icon('notification', 11)}</span>
			</div>
		</footer>
	</div>
</div>

<style>
	:global(body) {
		background: #000;
		overflow: hidden;
	}

	.screen {
		box-sizing: border-box;
		width: 1280px;
		height: 720px;
		padding: 0 63px;
		background: #000;
		font-family: "Open Sans", "Noto Sans", sans-serif;
		overflow: hidden;
	}

	.screen :global(*) {
		box-sizing: border-box;
	}

	.window {
		display: flex;
		flex-direction: column;
		width: 1154px;
		height: 720px;
		background: #fdfdfd;
	}

	.icon {
		display: block;
		flex: none;
	}

	/* Browser */
	.tabstrip {
		display: flex;
		height: 20px;
		background: #dcdfe6;
		color: #3c4043;
	}

	.tab {
		display: flex;
		align-items: center;
		width: 145px;
		margin-left: 5px;
		padding: 0 7px 0 7px;
		border-radius: 5px 5px 0 0;
		background: #fdfdfd;
	}

	.tab-title {
		flex: 1;
		margin-left: 6px;
		color: #55585c;
		font-size: 7.1px;
		letter-spacing: -0.15px;
		white-space: nowrap;
	}

	.new-tab {
		margin: 6.5px 0 0 9px;
	}

	.window-controls {
		display: flex;
		align-items: center;
		gap: 20px;
		height: 17px;
		margin-left: auto;
		padding-right: 11.5px;
	}

	.address-row {
		display: flex;
		align-items: center;
		height: 22px;
		color: #4a4d51;
	}

	.history {
		display: flex;
		width: 86px;
		padding-left: 4.5px;
	}

	.history span {
		display: flex;
		justify-content: center;
		width: 19.5px;
	}

	.history .dim {
		color: #b5b7b9;
	}

	.url {
		display: flex;
		align-items: center;
		width: 917px;
		height: 20px;
		padding: 0 6px;
		border-radius: 10px;
		background: #f0f1f4;
	}

	.url-text {
		flex: 1;
		margin-left: 6px;
		color: #74777b;
		font-size: 8.2px;
		letter-spacing: -0.02px;
		white-space: nowrap;
	}

	.url-text b {
		color: #3c3f43;
		font-weight: 400;
	}

	.url .icon:last-child {
		margin-left: 9.5px;
	}

	.extensions {
		display: flex;
		margin-left: 4.5px;
	}

	.extensions span {
		display: flex;
		justify-content: center;
		width: 19.1px;
	}

	.profile {
		display: flex;
		align-items: center;
		gap: 8.5px;
		margin-left: 3.5px;
		padding-left: 8px;
		border-left: 1px solid #ddd;
	}

	.bookmarks {
		display: flex;
		align-items: center;
		height: 19px;
		padding: 0 12px 2.5px 9px;
		border-bottom: 1px solid #dadce0;
		color: #5a5d61;
		font-size: 7.1px;
		letter-spacing: -0.05px;
		white-space: nowrap;
	}

	.bookmark {
		display: flex;
		flex: none;
		align-items: center;
		gap: 4.5px;
	}

	.bookmark.apps {
		gap: 6px;
	}

	.more {
		margin-left: auto;
		font-size: 10px;
	}

	/* Page */
	.viewport {
		position: relative;
		flex: 1;
		display: grid;
		grid-template-columns: 1143px 11px;
		grid-template-rows: 36px 1fr;
		min-height: 0;
		overflow: hidden;
	}

	.navbar {
		display: flex;
		align-items: center;
		padding-left: 23.5px;
		border-bottom: 2px solid #abc454;
		background: #fdfdfd;
		font-size: 11.3px;
		font-weight: 300;
		letter-spacing: -0.15px;
		white-space: nowrap;
	}

	.nav-item {
		display: flex;
		align-items: center;
		gap: 4.5px;
		color: #17191b;
	}

	.nav-item span,
	.nav-blocks,
	.nav-width {
		color: #222;
	}

	.nav-item.sitemap {
		gap: 2px;
	}

	.nav-right {
		display: flex;
		align-items: center;
		height: 100%;
		margin-left: auto;
		width: 235px;
	}

	.nav-right span {
		display: flex;
		align-items: center;
	}

	.settings {
		gap: 5.5px;
		width: 39.5px;
		margin-top: -1px;
		color: #2e6cb3;
	}

	.settings .icon:last-child {
		margin-top: 3px;
	}

	.nav-blocks {
		gap: 3px;
		width: 111px;
	}

	.nav-width {
		gap: 4.5px;
	}

	.nav-blocks .icon,
	.nav-width .icon {
		color: #111;
	}

	.page {
		grid-row: 2;
		display: flex;
		min-height: 0;
		overflow: hidden;
	}

	.tree {
		width: 307px;
		padding: 1px 0 0 30.5px;
		color: #456c9f;
		font-size: 10.83px;
	}

	.tree-row {
		display: flex;
		align-items: center;
		height: 23.24px;
		white-space: nowrap;
	}

	.tree-icon {
		display: flex;
		align-items: center;
		width: 13px;
	}

	.tree-icon.down,
	.tree-icon.right {
		color: #54729a;
	}

	.tree-icon.down {
		padding-left: 0.5px;
	}

	.tree-icon.right,
	.tree-icon.shield,
	.tree-icon.checked,
	.tree-icon.table {
		margin-left: -1px;
		margin-right: 1px;
	}

	.tree-icon.shield,
	.tree-icon.checked,
	.tree-icon.table {
		color: #2c66a8;
	}

	.tree-icon.lesson {
		margin-top: -5px;
	}

	.form {
		width: 810px;
		color: #484848;
		font-size: 10.87px;
	}

	.field-end {
		width: 411px;
		height: 1px;
		margin: 1px 0 20px 207px;
		background: #ddd;
	}

	.row {
		display: grid;
		grid-template-columns: 181.5px 602.5px;
		column-gap: 25.5px;
		align-items: start;
	}

	.label {
		text-align: right;
	}

	.content-label {
		margin-top: 3px;
	}

	.editor {
		height: 299px;
		border: 1px solid #b9b9b9;
		background: #fdfdfd;
	}

	.toolbar {
		display: flex;
		flex-direction: column;
		gap: 8.5px;
		height: 67px;
		padding: 6.5px 7px;
		border-bottom: 1px solid #b9b9b9;
		background: #f1f1f1;
	}

	.tool-row,
	.tool-group {
		display: flex;
	}

	.tool-row {
		gap: 6.8px;
	}

	.tool-group {
		height: 22px;
		border-radius: 3px;
		background: #fff;
		box-shadow: 0 0 0 1px #d6d6d6;
	}

	.tool {
		display: flex;
		align-items: center;
		justify-content: center;
		gap: 3px;
		color: #373a40;
	}

	.tool + .tool {
		border-left: 1px solid #ddd;
	}

	.tool.active {
		background: #ececec;
	}

	.tool.disabled {
		color: #9a9a9a;
	}

	.serif {
		font-family: "Liberation Serif", serif;
		font-size: 14.5px;
		line-height: 1;
	}

	.underline {
		text-decoration: underline;
	}

	.strike {
		text-decoration: line-through;
	}

	.h5p {
		color: #000;
		font-family: "Liberation Sans", sans-serif;
		font-size: 9px;
		font-weight: 700;
		letter-spacing: -0.1px;
		-webkit-text-stroke: 0.5px #000;
	}

	.script {
		font-size: 10.5px;
		font-weight: 600;
		line-height: 1;
	}

	.script sub,
	.script sup {
		font-size: 7px;
		line-height: 0;
	}

	.script sub {
		vertical-align: -2px;
	}

	.content {
		position: relative;
		height: 230px;
		padding: 3px 9.5px;
	}

	.content p {
		margin: 0;
		color: #222;
		font: 15.6px/24px Roboto, sans-serif;
		letter-spacing: 0.26px;
	}

	.event {
		display: block;
		margin: 12px auto 0;
	}

	.event text {
		fill: #1a1508;
		font-family: "Liberation Sans", Arial, sans-serif;
		font-size: 25px;
		text-anchor: middle;
	}

	.grip {
		position: absolute;
		right: 1px;
		bottom: 1px;
	}

	.saved {
		display: flex;
		align-items: center;
		gap: 3px;
		width: 128px;
		height: 26px;
		padding-left: 11px;
		border-radius: 0 0 8px 8px;
		background: #f0f0f0;
	}

	.saved .icon {
		margin-top: 3px;
		color: #777;
	}

	.saved span {
		margin-top: -1px;
	}

	.check-row {
		display: flex;
		align-items: center;
		height: 31.2px;
		margin-left: 207px;
	}

	.row + .check-row {
		margin-top: 7px;
	}

	.check-row input {
		position: absolute;
		opacity: 0;
	}

	.box {
		width: 10px;
		height: 10px;
		margin: 1px 4.5px 0 0;
		border: 1px solid #8a8a8a;
		border-radius: 2px;
		background: #fff;
	}

	.box.on {
		border: 0;
		background: #0a68d2;
	}

	section {
		height: 35.5px;
		border-top: 1px solid #e4e4e4;
	}

	section.open {
		height: 124px;
		margin-top: 9px;
	}

	h3 {
		display: flex;
		align-items: center;
		height: 33.5px;
		margin: 0;
		color: #3a6ba5;
		font-size: 17.4px;
		font-weight: 400;
	}

	.fold {
		width: 9px;
		margin: 0 6.5px 0 1px;
		border: 4.5px solid transparent;
		border-top: 5px solid #8b8b8b;
		border-bottom: 0;
	}

	.fold.closed {
		width: 5px;
		margin: 0 8.5px 0 3px;
		border: 4.5px solid transparent;
		border-left: 5px solid #8b8b8b;
		border-right: 0;
	}

	.open .row {
		margin-top: 4.5px;
	}

	.open .label {
		margin-top: 3.5px;
		line-height: 16px;
	}

	.required {
		display: flex;
		justify-content: flex-end;
		gap: 4px;
		margin-right: -1px;
	}

	.open .row.jump {
		margin-top: 18.5px;
	}

	.text-input {
		width: 303px;
		height: 24px;
		padding: 0 9px;
		border: 1px solid #d8dade;
		border-radius: 2px;
		background: #fff;
		color: #55595c;
		font: inherit;
	}

	.select {
		display: flex;
		align-items: center;
		justify-content: space-between;
		width: 288.5px;
		height: 27.5px;
		padding: 0 8px 0 9px;
		border: 1px solid #7cafda;
		background: #fff;
		box-shadow: 0 0 0 2px #c6dcee;
		color: #55595c;
	}

	.select .icon {
		color: #333;
	}

	.gutter {
		flex: 1;
		margin-left: 10px;
		background: #ebebeb;
	}

	.scrollbar {
		grid-column: 2;
		grid-row: 1 / 3;
		display: flex;
		flex-direction: column;
		align-items: center;
		background: #f1f1f1;
	}

	.thumb {
		width: 8.5px;
		height: 174px;
		margin-top: 68px;
		background: #c1c1c1;
	}

	.arrow {
		margin-top: 5px;
		border: 2.5px solid transparent;
		border-top: 0;
		border-bottom: 3px solid #444;
	}

	.arrow.down {
		margin: auto 0 4px;
		border-top: 3px solid #444;
		border-bottom: 0;
	}

	/* Controls that float over the page */
	.side-tools {
		position: absolute;
		top: 0;
		right: 11px;
		display: flex;
		flex-direction: column;
		align-items: flex-end;
		gap: 4px;
		color: #50555a;
	}

	.side-toggle,
	.side-button {
		display: flex;
		align-items: center;
		justify-content: center;
		width: 21.5px;
		height: 22px;
		margin-right: 2.5px;
		border-radius: 3px;
		background: #fff;
		box-shadow: 0 0 2px #aaa;
	}

	.side-toggle {
		width: 24.5px;
		height: 30px;
		margin: 0 0 4.5px;
		border-radius: 0;
		padding-right: 2px;
	}

	.to-top {
		position: absolute;
		top: 539.5px;
		left: 1115px;
		display: grid;
		place-items: center;
		width: 26px;
		height: 24px;
		border-radius: 3px;
		background: #b0b0b0;
		color: #f4f4f4;
	}

	.click {
		position: absolute;
		top: 425px;
		left: 785px;
		width: 30px;
		height: 30px;
		padding: 15px 0 0 13px;
		border-radius: 50%;
		background: #ee8c35;
	}

	/* Desktop taskbar */
	.taskbar {
		display: flex;
		height: 24px;
		background: #0d0f15;
		color: #f2f2f2;
		font-size: 7.1px;
		white-space: nowrap;
	}

	.task {
		display: flex;
		align-items: center;
		justify-content: center;
		gap: 3px;
	}

	.task.open {
		justify-content: flex-start;
		margin-right: 5px;
		padding-left: 3.5px;
		border-bottom: 1.5px solid #a9c4ea;
	}

	.task.outlook {
		gap: 2px;
	}

	.task.active {
		margin-right: 0;
		padding-left: 5.5px;
		background: #3b3e44;
	}

	.tray {
		display: flex;
		align-items: center;
		margin: 0 2px 0 auto;
		padding-right: 2px;
		border-right: 1px solid #333;
	}

	.tray-icon {
		display: flex;
		justify-content: center;
		width: 19.4px;
	}

	.clock {
		display: flex;
		flex-direction: column;
		align-items: center;
		gap: 0.5px;
		width: 40px;
		line-height: 10px;
		font-size: 6.7px;
	}

	.notify {
		margin: 0 10px 0 6px;
	}
</style>
